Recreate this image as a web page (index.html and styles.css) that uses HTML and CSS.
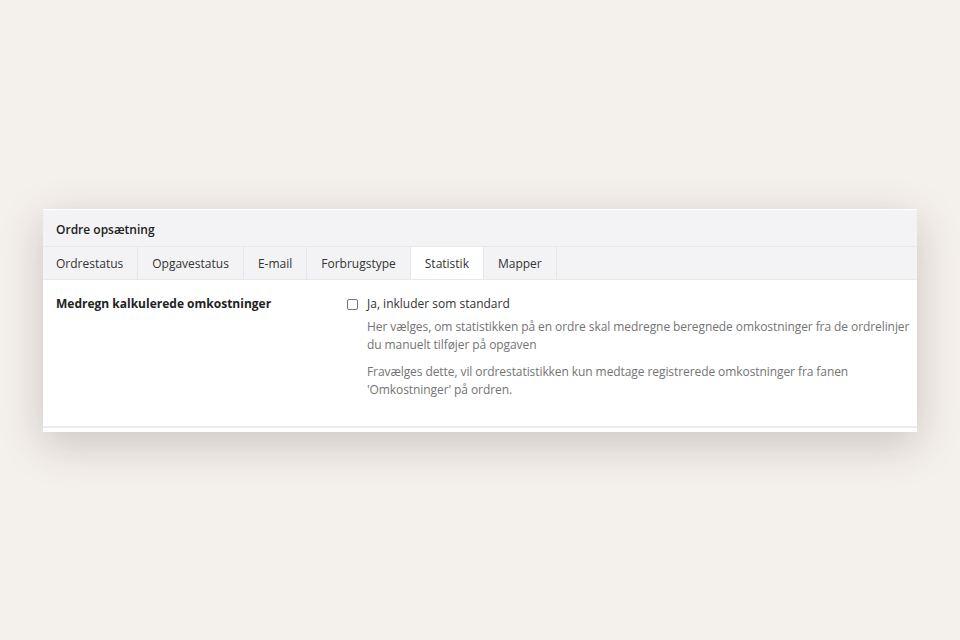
FILE: index.html
```html
<!DOCTYPE html>
<html lang="da">
<head>
    <meta charset="UTF-8">
    <meta name="viewport" content="width=device-width, initial-scale=1.0">
    <title>Ordre opsætning</title>
    <link rel="stylesheet" href="styles.css">
</head>
<body>
    <div class="panel">
        <div class="panel-header">Ordre opsætning</div>
        <div class="tabs">
            <div class="tab">Ordrestatus</div>
            <div class="tab">Opgavestatus</div>
            <div class="tab">E-mail</div>
            <div class="tab">Forbrugstype</div>
            <div class="tab active">Statistik</div>
            <div class="tab">Mapper</div>
        </div>
        <div class="panel-body">
            <div class="setting">
                <div class="setting-label">Medregn kalkulerede omkostninger</div>
                <div class="setting-value">
                    <label class="check">
                        <span class="box"></span>
                        Ja, inkluder som standard
                    </label>
                    <p class="help">Her vælges, om statistikken på en ordre skal medregne beregnede omkostninger fra de ordrelinjer du manuelt tilføjer på opgaven</p>
                    <p class="help">Fravælges dette, vil ordrestatistikken kun medtage registrerede omkostninger fra fanen 'Omkostninger' på ordren.</p>
                </div>
            </div>
        </div>
        <div class="panel-footer"></div>
    </div>
</body>
</html>
```
FILE: styles.css
```css
body {
    margin: 0;
    padding: 209px 0 0 43px;
    background-color: #f4f0ec;
    font-family: "Open Sans", "Noto Sans", sans-serif;
    font-size: 12px;
    color: #222;
    height: 640px;
    box-sizing: border-box;
}

.panel {
    width: 874px;
    background: #fff;
    border-top: 1px solid #fff;
    box-shadow: 0 12px 40px rgba(60, 45, 35, 0.22);
}

.panel-header {
    background-color: #f3f3f5;
    height: 36px;
    line-height: 40px;
    padding: 0 13px;
    font-weight: 600;
    border-bottom: 1px solid #e8e8ec;
}

.tabs {
    display: flex;
    background-color: #f3f3f5;
    border-bottom: 1px solid #e8e8ec;
    height: 32px;
}

.tab {
    padding: 0 14px;
    line-height: 34px;
    border-right: 1px solid #e6e6ea;
    color: #333;
}

.tab:first-child {
    padding-left: 13px;
}

.tab.active {
    background: #fff;
}

.panel-body {
    padding: 14px 0 27px 13px;
}

.setting {
    display: flex;
}

.setting-label {
    width: 291px;
    flex-shrink: 0;
    font-weight: 700;
    line-height: 20px;
}

.check {
    display: flex;
    align-items: center;
    line-height: 20px;
    color: #333;
}

.box {
    width: 9px;
    height: 9px;
    border: 1px solid #777;
    border-radius: 2px;
    margin-right: 9px;
    background: #fff;
}

.help {
    margin: 4px 0 0 20px;
    line-height: 18px;
    color: #747474;
    letter-spacing: -0.08px;
}

.help + .help {
    margin-top: 9px;
}

.panel-footer {
    height: 4px;
    border-top: 2px solid #ececee;
}
```
